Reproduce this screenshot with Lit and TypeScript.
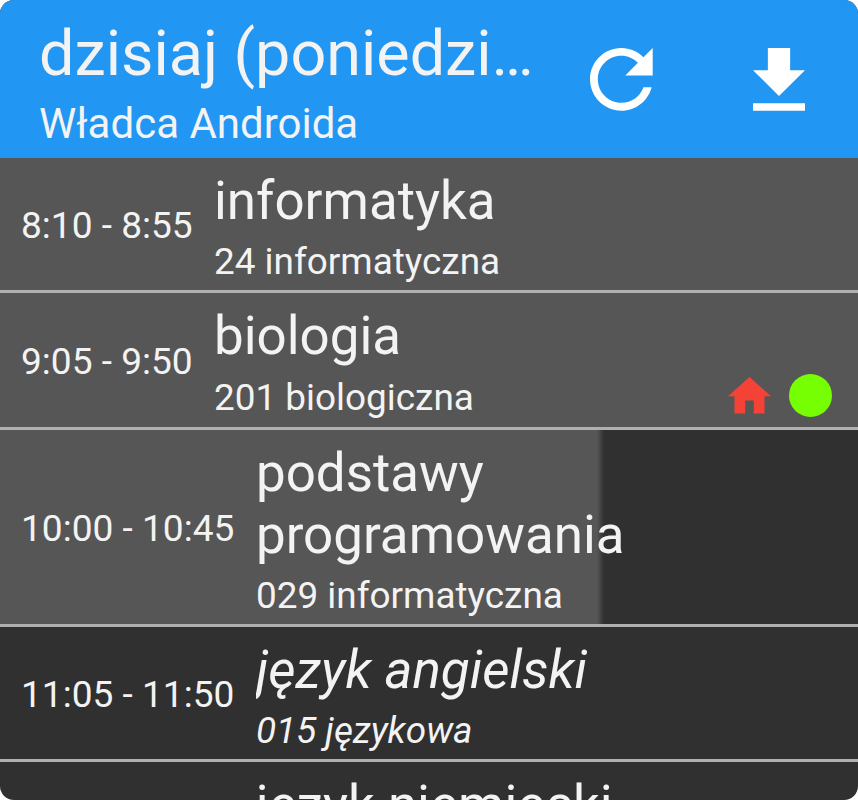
import { LitElement, html, css } from "lit";
import { customElement } from "lit/decorators.js";
import { classMap } from "lit/directives/class-map.js";

interface Lesson {
  time: string;
  name: string[];
  room: string;
  kind: string;
  marks?: boolean;
}

const lessons: Lesson[] = [
  { time: "8:10 - 8:55", name: ["informatyka"], room: "24 informatyczna", kind: "first" },
  { time: "9:05 - 9:50", name: ["biologia"], room: "201 biologiczna", kind: "second", marks: true },
  { time: "10:00 - 10:45", name: ["podstawy", "programowania"], room: "029 informatyczna", kind: "current" },
  { time: "11:05 - 11:50", name: ["język angielski"], room: "015 językowa", kind: "changed" },
  { time: "", name: ["język niemiecki"], room: "", kind: "next" },
];

@customElement("app-root")
export class AppRoot extends LitElement {
  static styles = css`
    :host {
      display: block;
      width: 858px;
      height: 800px;
      background: #fff;
      font-family: Roboto, sans-serif;
      color: #f3f3f3;
    }
    .widget {
      height: 800px;
      overflow: hidden;
      border-radius: 14px;
      background: #303030;
      box-sizing: border-box;
    }
    header {
      height: 158px;
      background: #2196f3;
      display: flex;
      box-sizing: border-box;
      padding-left: 39px;
    }
    .titles { width: 551px; padding-top: 17px; white-space: nowrap; }
    .title { font-size: 62.9px; line-height: 74px; }
    .sub { font-size: 42px; line-height: 49px; padding-top: 8px; }
    .action { height: 62.7px; margin-top: 48px; fill: #fff; }
    .refresh { width: 62.7px; }
    .download { width: 52px; margin-left: 100.3px; }
    .row {
      display: flex;
      align-items: center;
      box-sizing: border-box;
      border-bottom: 3px solid #b0b0b0;
      padding: 4px 0 0 21px;
      white-space: nowrap;
    }
    .first { height: 135px; background: #565656; }
    .second { height: 137px; background: #565656; }
    .current {
      height: 197px;
      background: linear-gradient(to right, #565656 597px, #303030 604px);
    }
    .changed { height: 135px; font-style: italic; }
    .next { height: 135px; }
    .time { width: 193px; font-size: 37.1px; line-height: 44px; font-style: normal; }
    .current .time, .changed .time, .next .time { width: 235px; }
    .lesson { overflow: hidden; padding-right: 8px; }
    .name { font-size: 52.9px; line-height: 62px; }
    .changed .name { font-size: 53px; }
    .room { font-size: 36.9px; line-height: 43px; min-height: 43px; padding-top: 8px; }
    .second .room { padding-top: 9px; }
    .marks { display: flex; align-self: flex-end; align-items: center; gap: 18px; margin: 0 26px 10px auto; }
    .home { width: 43px; height: 36.5px; fill: #f44336; }
    .dot { width: 43px; height: 43px; border-radius: 50%; background: #76ff03; }
  `;

  private marks() {
    return html`<div class="marks">
      <svg class="home" viewBox="2 3 20 17"><path d="M10 20v-6h4v6h5v-8h3L12 3 2 12h3v8z"/></svg>
      <span class="dot"></span>
    </div>`;
  }

  render() {
    return html`<main class="widget">
      <header>
        <div class="titles">
          <div class="title">dzisiaj (poniedzi…</div>
          <div class="sub">Władca Androida</div>
        </div>
        <svg class="action refresh" viewBox="4 4 16 16"><path d="M17.65 6.35C16.2 4.9 14.21 4 12 4c-4.42 0-7.99 3.58-7.99 8s3.57 8 7.99 8c3.73 0 6.84-2.55 7.73-6h-2.08c-.82 2.33-3.04 4-5.65 4-3.31 0-6-2.69-6-6s2.69-6 6-6c1.66 0 3.14.69 4.22 1.78L13 11h7V4l-2.35 2.35z"/></svg>
        <svg class="action download" viewBox="5 3 14 17" preserveAspectRatio="none"><path d="M19 9h-4V3H9v6H5l7 7 7-7zM5 18v2h14v-2H5z"/></svg>
      </header>
      ${lessons.map(
        (l) => html`<section class=${classMap({ row: true, [l.kind]: true })}>
          <div class="time">${l.time}</div>
          <div class="lesson">
            ${l.name.map((n) => html`<div class="name">${n}</div>`)}
            <div class="room">${l.room}</div>
          </div>
          ${l.marks ? this.marks() : null}
        </section>`
      )}
    </main>`;
  }
}
